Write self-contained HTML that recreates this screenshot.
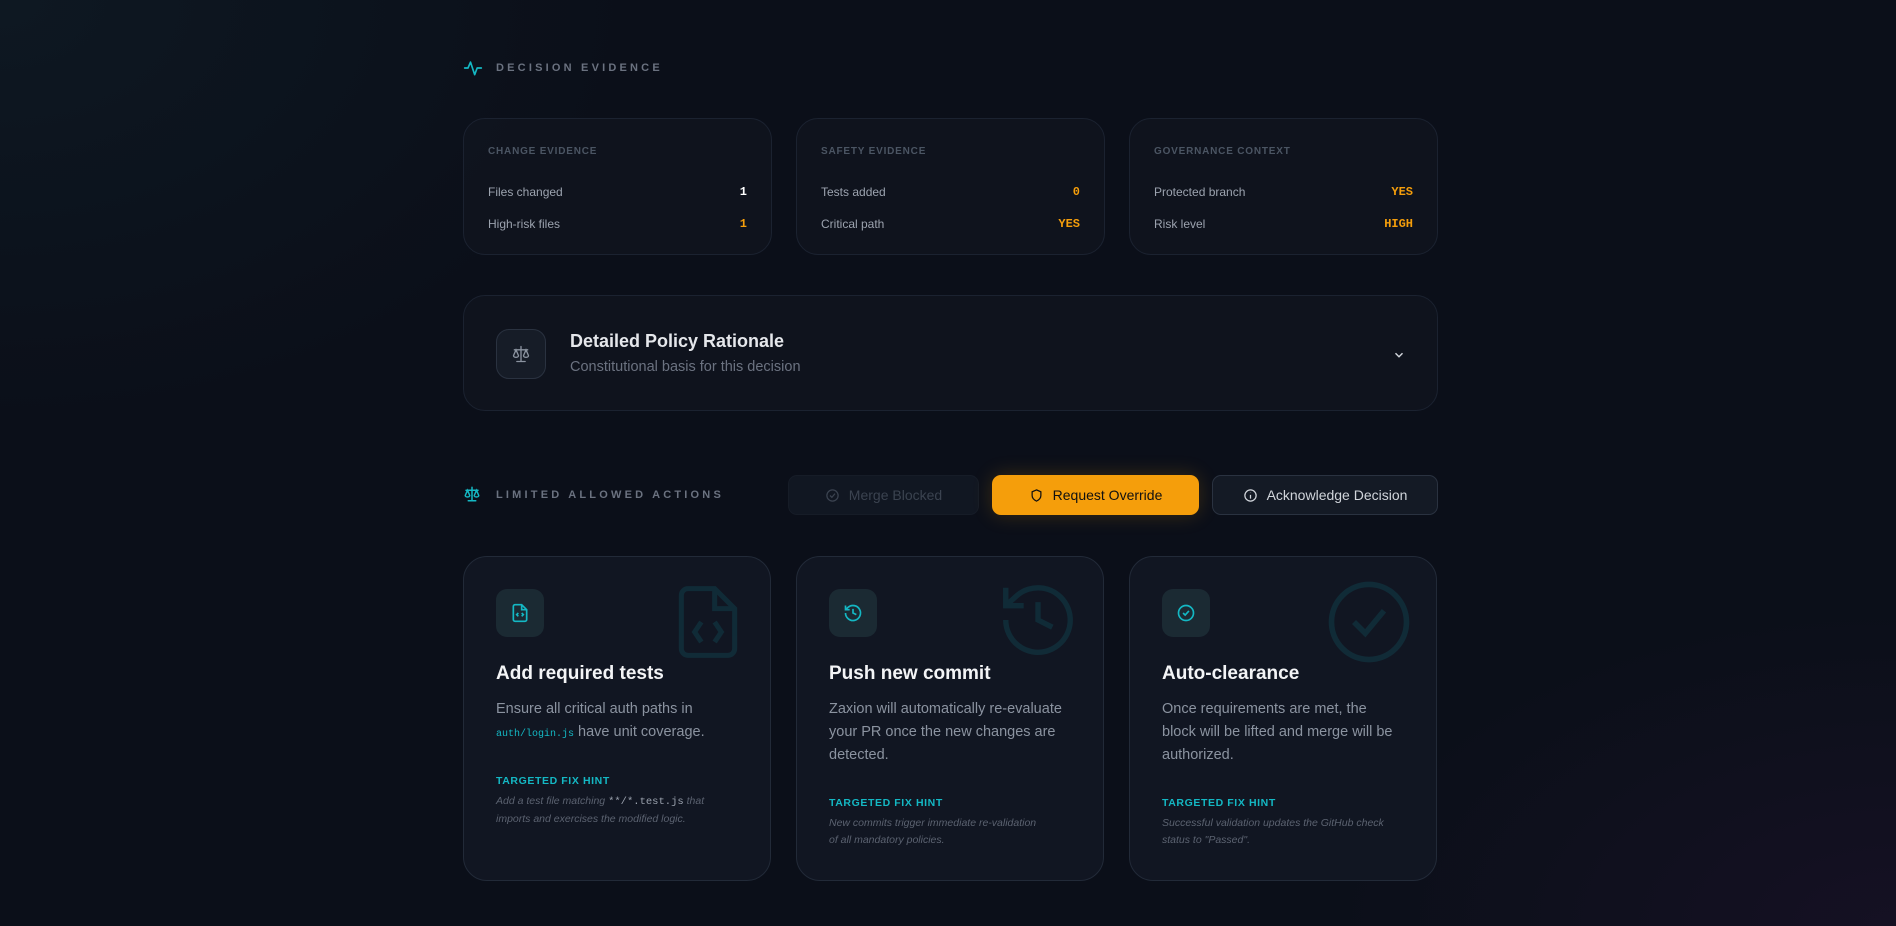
<!DOCTYPE html>
<html><head><meta charset="utf-8"><style>
*{box-sizing:border-box;margin:0;padding:0}
html,body{width:1896px;height:926px;overflow:hidden}
body{background:#0b0f19;background-image:radial-gradient(ellipse 900px 600px at 0 0,rgba(20,45,55,.3),transparent 70%),radial-gradient(ellipse 800px 450px at 1896px 926px,rgba(28,18,42,.6),transparent 70%);font-family:"Liberation Sans",sans-serif;color:#e5e7eb;position:relative}
.abs{position:absolute}
.sec{font-size:11px;font-weight:bold;letter-spacing:3.2px;color:#6b7280}
.card{position:absolute;background:rgba(17,22,32,.7);border:1px solid #1b2230;border-radius:22px}
.lab{position:absolute;left:24px;top:27px;font-size:10px;font-weight:bold;letter-spacing:.8px;color:#4b5563}
.row{position:absolute;left:24px;right:24px;font-size:12px;color:#9ca3af;display:flex;justify-content:space-between}
.v{font-family:"Liberation Mono",monospace;font-weight:bold;font-size:12px;color:#f59e0b}
.btn{position:absolute;top:475px;height:40px;border-radius:9px;display:flex;align-items:center;justify-content:center;gap:9px;font-size:14px}
.ac{position:absolute;top:556px;width:308px;height:325px;background:#111622;border:1px solid #222a38;border-radius:24px;overflow:hidden}
.ib{position:absolute;left:32px;top:32px;width:48px;height:48px;border-radius:11px;background:#1b2a33;display:flex;align-items:center;justify-content:center}
.t{position:absolute;left:32px;top:106px;font-size:19px;font-weight:bold;color:#f3f4f6}
.d{position:absolute;left:32px;top:141px;width:238px;font-size:14.5px;line-height:23px;color:#8b93a0}
.hl{position:absolute;left:32px;font-size:10.5px;font-weight:bold;letter-spacing:.6px;color:#14b8c4}
.ht{position:absolute;left:32px;width:236px;font-size:10.5px;line-height:17px;font-style:italic;color:#5b6270}
.bg{position:absolute;right:22px;top:20px;opacity:.13}
</style></head><body>
<svg class="abs" style="left:463px;top:58px" width="20" height="20" viewBox="0 0 24 24" fill="none" stroke="#14b8c4" stroke-width="2" stroke-linecap="round" stroke-linejoin="round"><path d="M2 12h4l3 -7 5 15 3 -8h5"/></svg>
<div class="abs sec" style="left:496px;top:62px">DECISION EVIDENCE</div>

<div class="card" style="left:463px;top:118px;width:309px;height:137px"><div class="lab">CHANGE EVIDENCE</div>
<div class="row" style="top:66px"><span>Files changed</span><span class="v" style="color:#fff">1</span></div>
<div class="row" style="top:98px"><span>High-risk files</span><span class="v">1</span></div></div>
<div class="card" style="left:796px;top:118px;width:309px;height:137px"><div class="lab">SAFETY EVIDENCE</div>
<div class="row" style="top:66px"><span>Tests added</span><span class="v">0</span></div>
<div class="row" style="top:98px"><span>Critical path</span><span class="v">YES</span></div></div>
<div class="card" style="left:1129px;top:118px;width:309px;height:137px"><div class="lab">GOVERNANCE CONTEXT</div>
<div class="row" style="top:66px"><span>Protected branch</span><span class="v">YES</span></div>
<div class="row" style="top:98px"><span>Risk level</span><span class="v">HIGH</span></div></div>

<div class="card" style="left:463px;top:295px;width:975px;height:116px">
<div class="abs" style="left:32px;top:33px;width:50px;height:50px;border-radius:13px;border:1px solid #2a3240;background:#161c27;display:flex;align-items:center;justify-content:center">
<svg width="20" height="20" viewBox="0 0 24 24" fill="none" stroke="#8b93a0" stroke-width="1.6" stroke-linecap="round"><path d="M12 3v18M7 21h10M4 7h16M6 7l-3 7a3 2 0 0 0 6 0zM18 7l-3 7a3 2 0 0 0 6 0z"/></svg></div>
<div class="abs" style="left:106px;top:35px;font-size:18px;font-weight:bold;color:#e5e7eb">Detailed Policy Rationale</div>
<div class="abs" style="left:106px;top:63px;font-size:14.5px;color:#6b7280">Constitutional basis for this decision</div>
<svg class="abs" style="left:928px;top:52px" width="14" height="14" viewBox="0 0 24 24" fill="none" stroke="#d1d5db" stroke-width="2.5"><path d="M6 9l6 6 6-6"/></svg>
</div>

<svg class="abs" style="left:463px;top:485px" width="18" height="18" viewBox="0 0 24 24" fill="none" stroke="#14b8c4" stroke-width="2" stroke-linecap="round"><path d="M12 3v18M7 21h10M4 7h16M6 7l-3 7a3 2 0 0 0 6 0zM18 7l-3 7a3 2 0 0 0 6 0z"/></svg>
<div class="abs sec" style="left:496px;top:489px">LIMITED ALLOWED ACTIONS</div>

<div class="btn" style="left:788px;width:191px;background:#111722;border:1px solid #161c27;color:#3b4350"><svg width="15" height="15" viewBox="0 0 24 24" fill="none" stroke="#3b4350" stroke-width="2"><circle cx="12" cy="12" r="9"/><path d="M8 12l3 3 5-6"/></svg>Merge Blocked</div>
<div class="btn" style="left:992px;width:207px;background:#f59e0b;color:#111;box-shadow:0 0 20px rgba(245,158,11,.2)"><svg width="15" height="15" viewBox="0 0 24 24" fill="none" stroke="#111" stroke-width="2"><path d="M12 3l7 3v6c0 4-3 7-7 9-4-2-7-5-7-9V6z"/></svg>Request Override</div>
<div class="btn" style="left:1212px;width:226px;background:#141a25;border:1px solid #2a3240;color:#d1d5db"><svg width="15" height="15" viewBox="0 0 24 24" fill="none" stroke="#d1d5db" stroke-width="2"><circle cx="12" cy="12" r="9"/><path d="M12 11v6M12 7.5v.5"/></svg>Acknowledge Decision</div>

<div class="ac" style="left:463px">
<svg class="bg" width="80" height="90" viewBox="0 0 24 24" fill="none" stroke="#14b8c4" stroke-width="1.5"><path d="M14 2H6a2 2 0 0 0-2 2v16a2 2 0 0 0 2 2h12a2 2 0 0 0 2-2V8z"/><path d="M14 2v6h6M10 12l-2 3 2 3M14 12l2 3-2 3"/></svg>
<div class="ib"><svg width="20" height="20" viewBox="0 0 24 24" fill="none" stroke="#14b8c4" stroke-width="2"><path d="M14 2H6a2 2 0 0 0-2 2v16a2 2 0 0 0 2 2h12a2 2 0 0 0 2-2V8z"/><path d="M14 2v6h6M10 12l-2 2 2 2M14 12l2 2-2 2"/></svg></div>
<div class="t">Add required tests</div>
<div class="d">Ensure all critical auth paths in <span style="font-family:'Liberation Mono',monospace;font-size:10px;color:#14b8c4">auth/login.js</span> have unit coverage.</div>
<div class="hl" style="top:218px">TARGETED FIX HINT</div>
<div class="ht" style="top:236px;width:225px">Add a test file matching <span style="font-family:'Liberation Mono',monospace;font-style:normal;color:#9ca3af">**/*.test.js</span> that imports and exercises the modified logic.</div>
</div>

<div class="ac" style="left:796px">
<svg class="bg" width="86" height="86" viewBox="0 0 24 24" fill="none" stroke="#14b8c4" stroke-width="1.5"><path d="M3 12a9 9 0 1 0 3-6.7L3 8M3 3v5h5M12 7v5l4 2"/></svg>
<div class="ib"><svg width="20" height="20" viewBox="0 0 24 24" fill="none" stroke="#14b8c4" stroke-width="2"><path d="M3 12a9 9 0 1 0 3-6.7L3 8M3 3v5h5M12 7v5l4 2"/></svg></div>
<div class="t">Push new commit</div>
<div class="d">Zaxion will automatically re-evaluate your PR once the new changes are detected.</div>
<div class="hl" style="top:240px">TARGETED FIX HINT</div>
<div class="ht" style="top:258px;width:215px">New commits trigger immediate re-validation of all mandatory policies.</div>
</div>

<div class="ac" style="left:1129px">
<svg class="bg" width="90" height="90" viewBox="0 0 24 24" fill="none" stroke="#14b8c4" stroke-width="1.5"><circle cx="12" cy="12" r="10"/><path d="M8 12l3 3 5-6"/></svg>
<div class="ib"><svg width="20" height="20" viewBox="0 0 24 24" fill="none" stroke="#14b8c4" stroke-width="2"><circle cx="12" cy="12" r="9"/><path d="M8.5 12l2.5 2.5 4.5-5"/></svg></div>
<div class="t">Auto-clearance</div>
<div class="d" style="width:260px;white-space:nowrap">Once requirements are met, the<br>block will be lifted and merge will be<br>authorized.</div>
<div class="hl" style="top:240px">TARGETED FIX HINT</div>
<div class="ht" style="top:258px;width:225px">Successful validation updates the GitHub check status to "Passed".</div>
</div>
</body></html>
